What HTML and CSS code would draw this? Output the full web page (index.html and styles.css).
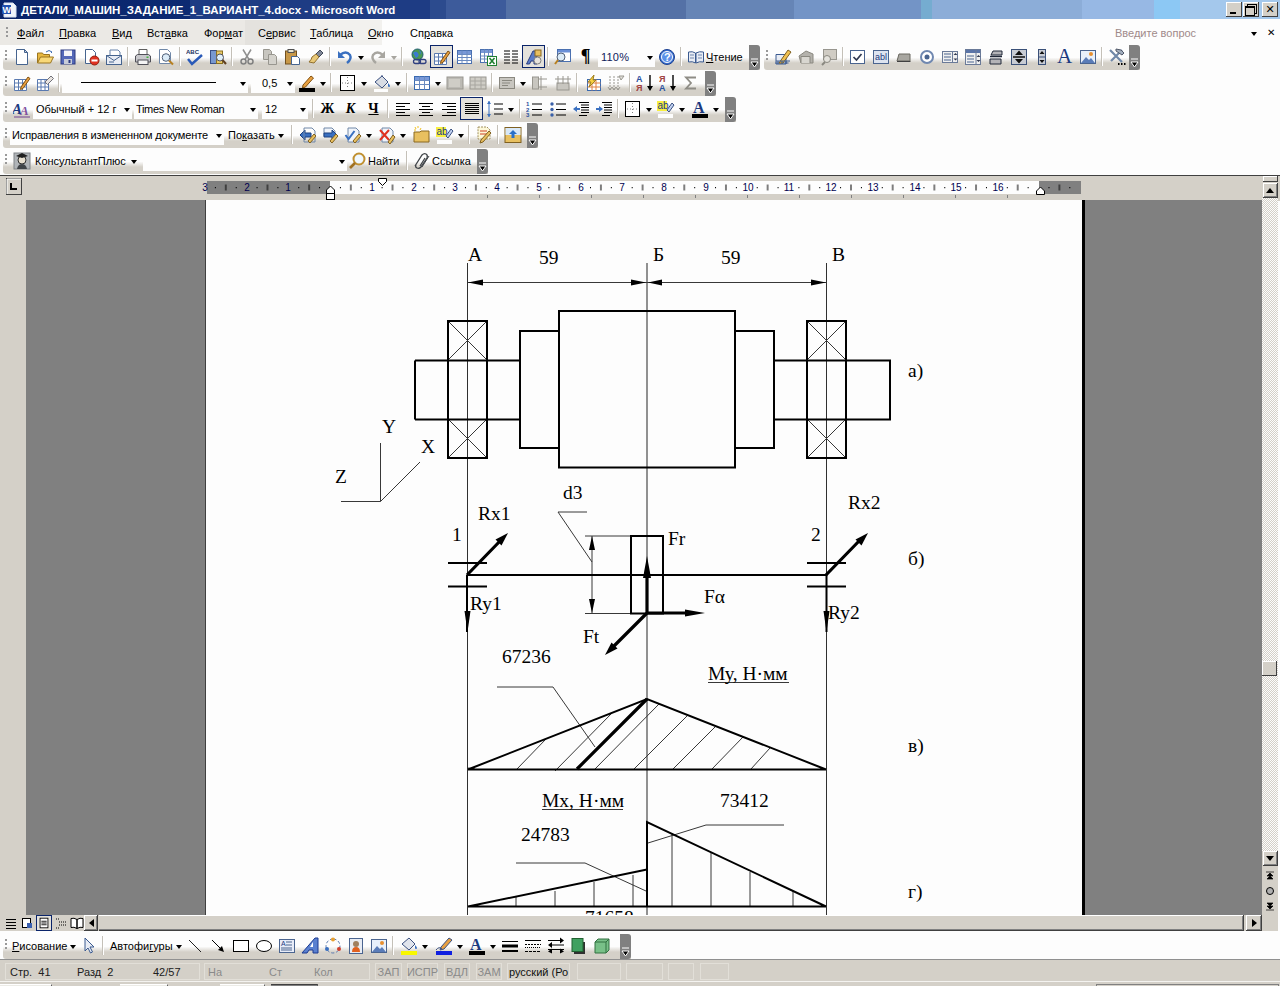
FILE: index.html
```html
<!DOCTYPE html>
<html lang="ru">
<head>
<meta charset="utf-8">
<title>Microsoft Word</title>
<link rel="stylesheet" href="styles.css">
</head>
<body>
<svg class="defs" width="0" height="0" aria-hidden="true">
<symbol id="new" viewBox="0 0 18 18"><path d="M3.5 1.5h8l3 3v12h-11z" fill="#fff" stroke="#46648f"/><path d="M11.5 1.5v3h3z" fill="#c8d4e8" stroke="#46648f"/></symbol>
<symbol id="open" viewBox="0 0 18 18"><path d="M1.5 15V5h5l1 1.5h6V9" fill="#e8b840" stroke="#9a7420"/><path d="M1.5 15l3-6h13l-3 6z" fill="#f8d878" stroke="#9a7420"/><path d="M10 4q3-3 6 0l-1 1" fill="none" stroke="#3a6ab0"/></symbol>
<symbol id="save" viewBox="0 0 18 18"><rect x="2" y="2" width="14" height="14" fill="#5468b8" stroke="#2c3a80"/><rect x="5" y="2.5" width="8" height="5.5" fill="#f4f4f8"/><rect x="5" y="11" width="8" height="5" fill="#c8ccd8"/><rect x="9.500" y="12" width="2" height="3" fill="#2c3a80"/></symbol>
<symbol id="perm" viewBox="0 0 18 18"><path d="M3.500 1.500h7l3 3v11h-10z" fill="#fff" stroke="#46648f"/><circle cx="12.500" cy="12.500" r="4.500" fill="#e03020" stroke="#902010"/><rect x="9.500" y="11.500" width="6" height="2" fill="#fff"/></symbol>
<symbol id="mail" viewBox="0 0 18 18"><path d="M5 8V2h8l2 2v4" fill="#fff" stroke="#6480a8"/><rect x="1.500" y="7.500" width="15" height="9" fill="#e8ecf4" stroke="#46648f"/><path d="M1.500 7.500l7.500 5 7.500-5M4 14h5" fill="none" stroke="#46648f"/></symbol>
<symbol id="print" viewBox="0 0 18 18"><path d="M5 7V1.500h8V7" fill="#fff" stroke="#606060"/><path d="M1.500 8l2-1.500h11l2 1.500v6h-15z" fill="#c8c8cc" stroke="#505058"/><rect x="4" y="12" width="10" height="4.500" fill="#f4f4f4" stroke="#505058"/><rect x="12.500" y="8.500" width="2" height="1.500" fill="#40b040"/></symbol>
<symbol id="prev" viewBox="0 0 18 18"><path d="M2.500 1.500h8l3 3v11h-11z" fill="#fff" stroke="#7088a8"/><circle cx="9" cy="9.500" r="3.800" fill="#dcecf8" stroke="#506078"/><path d="M12 12.500l4 4" stroke="#b88020" stroke-width="2"/></symbol>
<symbol id="res" viewBox="0 0 18 18"><rect x="1.500" y="2.500" width="6" height="13" fill="#7898d0" stroke="#3a5088"/><rect x="7.500" y="3" width="6" height="12.500" fill="#e8c868" stroke="#8a7020"/><circle cx="11" cy="9.500" r="3.500" fill="#e0f0fa" stroke="#505060"/><path d="M13.500 12l3.500 4" stroke="#604020" stroke-width="2"/></symbol>
<symbol id="cut" viewBox="0 0 18 18"><path d="M5 1.500l6 10M13 1.500l-6 10" stroke="#909090" stroke-width="1.500"/><circle cx="5.500" cy="13.500" r="2.500" fill="none" stroke="#808080" stroke-width="1.500"/><circle cx="12.500" cy="13.500" r="2.500" fill="none" stroke="#808080" stroke-width="1.500"/></symbol>
<symbol id="copy" viewBox="0 0 18 18"><path d="M2.500 1.500h6l2 2v8h-8z" fill="#c8c6c0" stroke="#98968f"/><path d="M7.500 6.500h6l2 2v8h-8z" fill="#d4d2cc" stroke="#98968f"/></symbol>
<symbol id="paste" viewBox="0 0 18 18"><rect x="1.500" y="3" width="11" height="13" fill="#c89848" stroke="#705020"/><rect x="4" y="1.500" width="6" height="3" fill="#e8e4d0" stroke="#505050"/><path d="M7.500 8.500h6l2 2v6h-8z" fill="#fff" stroke="#46648f"/></symbol>
<symbol id="paint" viewBox="0 0 18 18"><path d="M9 6l4-4 3 3-4 4z" fill="#808898" stroke="#404858"/><path d="M9 6l3 3-5 6-5-1q3-3 3-5z" fill="#e8c878" stroke="#907030"/></symbol>
<symbol id="undo" viewBox="0 0 18 18"><path d="M4 7q6-5 10 0 2 4-3 8" fill="none" stroke="#3a70c0" stroke-width="2.400"/><path d="M2 3v7h7z" fill="#3a70c0"/></symbol>
<symbol id="redo" viewBox="0 0 18 18"><path d="M14 7q-6-5-10 0-2 4 3 8" fill="none" stroke="#a8a6a0" stroke-width="2.400"/><path d="M16 3v7H9z" fill="#a8a6a0"/></symbol>
<symbol id="link" viewBox="0 0 18 18"><circle cx="7.500" cy="6.500" r="5.500" fill="#4a9a50" stroke="#1c5a70"/><path d="M3 5q3-3 5 0t-2 5M9 2q3 2 2 5" fill="#3a7ad0"/><rect x="3.500" y="11.500" width="7" height="4" rx="2" fill="none" stroke="#304080" stroke-width="1.300"/><rect x="9" y="11.500" width="7" height="4" rx="2" fill="none" stroke="#304080" stroke-width="1.300"/></symbol>
<symbol id="tdraw" viewBox="0 0 18 18"><path d="M1.500 5.500h12v11h-12zM1.500 9h12M1.500 13h12M5.500 5.500v11M9.500 5.500v11" fill="#fff" stroke="#5a7ab0"/><path d="M8 13l7-10 2 1.500-7 10-2.500 1z" fill="#e8a040" stroke="#805010"/></symbol>
<symbol id="tbl" viewBox="0 0 18 18"><rect x="1.500" y="2.500" width="14" height="13" fill="#fff" stroke="#4a70b0"/><rect x="2" y="3" width="13" height="3" fill="#7898d8"/><path d="M1.500 6.500h14M1.500 9.500h14M1.500 12.500h14M6 2.500v13M11 2.500v13" fill="none" stroke="#6a8ac0"/></symbol>
<symbol id="xl" viewBox="0 0 18 18"><rect x="1.500" y="1.500" width="12" height="13" fill="#fff" stroke="#4a70b0"/><rect x="2" y="2" width="11" height="3" fill="#7898d8"/><path d="M1.500 8h12M1.500 11h12M5.500 1.500v13M9.500 1.500v13" stroke="#6a8ac0"/><rect x="8.500" y="8.500" width="9" height="9" fill="#fff" stroke="#208030"/><path d="M10.500 10l5 6M15.500 10l-5 6" stroke="#208030" stroke-width="1.600"/></symbol>
<symbol id="cols" viewBox="0 0 18 18"><path d="M2 3h6M10 3h6M2 6h6M10 6h6M2 9h6M10 9h6M2 12h6M10 12h6M2 15h6M10 15h6" stroke="#000"/></symbol>
<symbol id="drw" viewBox="0 0 18 18"><path d="M1.500 16L8 3h4v13H9v-3H6l-1.500 3z" fill="#5a7cc8" stroke="#2a3f80"/><rect x="10" y="2" width="6" height="6" fill="#e8c060" stroke="#8a6820"/><circle cx="12.500" cy="12.500" r="3.500" fill="#e8e4dc" stroke="#808080"/></symbol>
<symbol id="map" viewBox="0 0 18 18"><rect x="3.500" y="1.500" width="13" height="12" fill="#fff" stroke="#4a70b0"/><rect x="4" y="2" width="12" height="2.500" fill="#6a90d8"/><circle cx="7" cy="9" r="4" fill="#dcecf8" stroke="#506078"/><path d="M4 12l-3 4" stroke="#b88020" stroke-width="2"/></symbol>
<symbol id="book" viewBox="0 0 18 18"><path d="M1.500 4q4-1 7 1v10q-3-2-7-1zM16.500 4q-4-1-7.500 1v10q3.500-2 7.500-1z" fill="#e8ecf4" stroke="#3a5a90"/><path d="M3 7h4M3 10h4M11 7h4M11 10h4" stroke="#7088b0"/></symbol>
<symbol id="fd" viewBox="0 0 18 18"><path d="M2 6.500h10V16H2z" fill="#e8ecf4" stroke="#3a5a90"/><path d="M1.500 15l13-0" stroke="#3a5a90"/><path d="M5 15L14 2l3 2-8 11z" fill="#f0c050" stroke="#806020"/><path d="M2 13h14M4 13v3M8 13v3M12 13v3" stroke="#3a5a90"/></symbol>
<symbol id="fg1" viewBox="0 0 18 18"><path d="M2 8l7-5 7 3v9H4z" fill="#b4b2ac" stroke="#8a8880"/><path d="M4 15V8.500h9V15" fill="#d8d6d0" stroke="#8a8880"/></symbol>
<symbol id="fg2" viewBox="0 0 18 18"><rect x="3.500" y="1.500" width="13" height="10" fill="#d0ccc4" stroke="#98968f"/><circle cx="7" cy="11" r="3.500" fill="#e4e2dc" stroke="#8a8880"/><path d="M5 14l-3 3" stroke="#8a8880" stroke-width="2"/></symbol>
<symbol id="fchk" viewBox="0 0 18 18"><rect x="1.500" y="2.500" width="14" height="13" fill="#fff" stroke="#4a648f"/><path d="M4.500 9l3 3 5-6" fill="none" stroke="#303850" stroke-width="1.700"/></symbol>
<symbol id="fbtn" viewBox="0 0 18 18"><path d="M4 6h11v7H2z" fill="#a8a6a0" stroke="#6a6860"/><path d="M2 13.500h13.500" stroke="#404040"/></symbol>
<symbol id="frad" viewBox="0 0 18 18"><circle cx="9" cy="9" r="6" fill="#fff" stroke="#7088b0" stroke-width="2"/><circle cx="9" cy="9" r="2.500" fill="#4a648f"/></symbol>
<symbol id="flst" viewBox="0 0 18 18"><rect x="1.500" y="3.500" width="15" height="11" fill="#f0f0f0" stroke="#6a7a98"/><path d="M3 6h7M3 9h7M3 12h7" stroke="#4a648f"/><path d="M11.500 3.500v11" stroke="#6a7a98"/><path d="M12.500 7l2-2 2 2zM12.500 10.500l2 2 2-2z" fill="#303850"/></symbol>
<symbol id="fcmb" viewBox="0 0 18 18"><rect x="1.500" y="1.500" width="15" height="15" fill="#f0f0f0" stroke="#6a7a98"/><rect x="2" y="2" width="14" height="3" fill="#5a74a8"/><path d="M3 8h7M3 11h7M3 14h7" stroke="#4a648f"/><path d="M12 2v14" stroke="#6a7a98"/><path d="M12.500 9l2-2 2 2zM12.500 12l2 2 2-2z" fill="#303850"/></symbol>
<symbol id="ffr" viewBox="0 0 18 18"><path d="M4 7l2-4h9v4zM3 11h11v5H3z" fill="#b4b4b8" stroke="#202838"/><path d="M3 8.500h12" stroke="#202838" stroke-width="1.500"/></symbol>
<symbol id="fsp" viewBox="0 0 18 18"><rect x="1.500" y="1.500" width="15" height="15" fill="#c8ccd4" stroke="#3a5078"/><path d="M9 2.500l4 4.500H5zM9 15.500l4-4.500H5z" fill="#101010"/><path d="M3 9h12" stroke="#101010" stroke-width="1.500"/></symbol>
<symbol id="fsc" viewBox="0 0 18 18"><rect x="5.500" y="1.500" width="7" height="15" fill="#c8ccd4" stroke="#3a5078"/><path d="M9 3l2.500 3h-5zM9 15l2.500-3h-5z" fill="#101010"/><path d="M6 9h6" stroke="#3a5078"/></symbol>
<symbol id="pic" viewBox="0 0 18 18"><rect x="1.500" y="2.500" width="15" height="13" fill="#e8f0fa" stroke="#4a648f"/><path d="M2 15l5-6 3 3 2-2 4 5z" fill="#5a7cb8"/><circle cx="12" cy="6" r="2" fill="#e89030"/></symbol>
<symbol id="tools" viewBox="0 0 18 18"><path d="M2 2l12 12M14 2L3 13" stroke="#7088a8" stroke-width="2.200"/><path d="M8 1l5 1 3 3-2 2-6-4z" fill="#a0acbc" stroke="#505868"/><path d="M10 16h1.500M13 16h1.500M16 16h1.500" stroke="#000" stroke-width="2"/></symbol>
<symbol id="eras" viewBox="0 0 18 18"><path d="M1.500 5.500h11v11h-11zM1.500 9h11M1.500 13h11M5 5.500v11M9 5.500v11" fill="#fff" stroke="#5a7ab0"/><path d="M9 8l6-6 2.500 2.500-6 6z" fill="#e8e4e0" stroke="#707078"/></symbol>
<symbol id="pen" viewBox="0 0 18 18"><path d="M5 11l8-9 2.500 2-8 9-3 1z" fill="#e8a040" stroke="#805010"/><rect x="1" y="14" width="16" height="4" fill="#000"/></symbol>
<symbol id="bord" viewBox="0 0 18 18"><rect x="1.500" y="1.500" width="14" height="15" fill="#fff" stroke="#000"/><path d="M8.500 3v12M3 9h11" stroke="#808080" stroke-dasharray="1 2"/></symbol>
<symbol id="fill" viewBox="0 0 18 18"><path d="M2 8l7-6 6 6-6 6z" fill="#d8dce4" stroke="#3a5080"/><path d="M15 9q2 2 2 3t-1 1-1-1z" fill="#3a70c0"/><path d="M9 2V1" stroke="#3a5080"/><rect x="1" y="15" width="14" height="3" fill="#fdfdfd"/></symbol>
<symbol id="tins" viewBox="0 0 18 18"><rect x="1.500" y="2.500" width="15" height="13" fill="#fff" stroke="#3a6ab0"/><rect x="2" y="3" width="14" height="3" fill="#7898d8"/><path d="M1.500 6.500h15M1.500 10.500h15M6.500 2.500v13M11.500 2.500v13" stroke="#6a8ac0"/></symbol>
<symbol id="mrg" viewBox="0 0 18 18"><rect x="1" y="3" width="16" height="12" fill="#bcbab4" stroke="#98968f"/><rect x="3" y="5" width="11" height="8" fill="#cfcdc6"/></symbol>
<symbol id="spl" viewBox="0 0 18 18"><rect x="1" y="3" width="16" height="12" fill="#cfcdc6" stroke="#98968f"/><path d="M1 7h16M1 11h16M6 3v12M12 3v12" stroke="#a8a6a0"/></symbol>
<symbol id="al" viewBox="0 0 18 18"><rect x="1.500" y="3.500" width="15" height="11" fill="#c8c6c0" stroke="#8a8880"/><path d="M4 6.500h10M4 9h8M4 11.500h6" stroke="#8a8880"/></symbol>
<symbol id="dr" viewBox="0 0 18 18"><rect x="1.500" y="3" width="6" height="12" fill="#c8c6c0" stroke="#98968f"/><path d="M10 2v14M8 5h8M8 13h8" stroke="#98968f"/></symbol>
<symbol id="dc" viewBox="0 0 18 18"><rect x="3" y="9" width="12" height="7" fill="#c8c6c0" stroke="#98968f"/><path d="M1 5h16M4 2v8M9 2v8M14 2v8" stroke="#98968f"/></symbol>
<symbol id="afm" viewBox="0 0 18 18"><rect x="3.500" y="5.500" width="13" height="11" fill="#fff" stroke="#3a6ab0"/><path d="M3.500 9h13M3.500 13h13M8 5.500v11M12 5.500v11" stroke="#e08040"/><path d="M10 1L4 8h3l-2 5 7-7H9z" fill="#f8d040" stroke="#a08020"/></symbol>
<symbol id="tdir" viewBox="0 0 18 18"><path d="M3 2v14M7 2v14M11 2v14" stroke="#98968f" stroke-dasharray="2 1"/><path d="M1 13l2 3 2-3M5 13l2 3 2-3M9 13l2 3 2-3" fill="none" stroke="#98968f"/><path d="M12 2h5l-3 4z" fill="#e4e2dc" stroke="#98968f"/></symbol>
<symbol id="sig" viewBox="0 0 18 18"><path d="M14 3.500H4l5 5.500-5 5.500h10" fill="none" stroke="#8e8c85" stroke-width="1.800"/></symbol>
<symbol id="al1" viewBox="0 0 18 18"><path d="M2 3.500h14M2 6.500h9M2 9.500h14M2 12.500h9M2 15.500h14" stroke="#000"/></symbol>
<symbol id="al2" viewBox="0 0 18 18"><path d="M2 3.500h14M5 6.500h8M2 9.500h14M5 12.500h8M2 15.500h14" stroke="#000"/></symbol>
<symbol id="al3" viewBox="0 0 18 18"><path d="M2 3.500h14M7 6.500h9M2 9.500h14M7 12.500h9M2 15.500h14" stroke="#000"/></symbol>
<symbol id="al4" viewBox="0 0 18 18"><path d="M2 3.500h14M2 5.500h14M2 7.500h14M2 9.500h14M2 11.500h14M2 13.500h14" stroke="#000"/></symbol>
<symbol id="lsp" viewBox="0 0 18 18"><path d="M3 1v16" stroke="#3a70c0"/><path d="M1 4l2-3 2 3zM1 14l2 3 2-3z" fill="#3a70c0"/><path d="M8 4h9M8 9h9M8 14h9" stroke="#000"/></symbol>
<symbol id="bul" viewBox="0 0 18 18"><circle cx="3" cy="4" r="1.700" fill="#3a60a8"/><circle cx="3" cy="9.500" r="1.700" fill="#3a60a8"/><circle cx="3" cy="15" r="1.700" fill="#3a60a8"/><path d="M7 4h10M7 9.500h10M7 15h10" stroke="#000"/></symbol>
<symbol id="outd" viewBox="0 0 18 18"><path d="M7 2.500h10M9 5h8M9 7.500h8M9 10h8M9 12.500h8M7 15.500h8" stroke="#000"/><path d="M1 9l4-3v6z" fill="#3a70c0"/><path d="M4 9h4" stroke="#3a70c0" stroke-width="2"/></symbol>
<symbol id="ind" viewBox="0 0 18 18"><path d="M7 2.500h10M9 5h8M9 7.500h8M9 10h8M9 12.500h8M7 15.500h8" stroke="#000"/><path d="M8 9L4 6v6z" fill="#3a70c0"/><path d="M1 9h4" stroke="#3a70c0" stroke-width="2"/></symbol>
<symbol id="tprev" viewBox="0 0 18 18"><path d="M2 9l5-5v3h6v4H7v3z" fill="#3a70c0" stroke="#1c4080"/><path d="M6 2h8l3 3v11H6z" fill="none" stroke="#7088a8"/><path d="M10 15l6-7 2 2-6 7z" fill="#e8c060" stroke="#806020"/></symbol>
<symbol id="tnext" viewBox="0 0 18 18"><path d="M3 2h8l3 3v5H3z" fill="#f0f4fa" stroke="#7088a8"/><path d="M16 9l-5-5v3H3v4h8v3z" fill="#3a70c0" stroke="#1c4080"/><path d="M9 15l6-7 2 2-6 7z" fill="#e8c060" stroke="#806020"/></symbol>
<symbol id="tacc" viewBox="0 0 18 18"><path d="M4 2h8l3 3v11H4z" fill="#f0f4fa" stroke="#7088a8"/><path d="M1.500 9l3 4 6-8" fill="none" stroke="#3a70c0" stroke-width="2"/><path d="M9 15l6-7 2 2-6 7z" fill="#e8c060" stroke="#806020"/></symbol>
<symbol id="trej" viewBox="0 0 18 18"><path d="M4 2h8l3 3v11H4z" fill="#f0f4fa" stroke="#7088a8"/><path d="M2 4l9 10M11 4l-9 10" stroke="#e03020" stroke-width="2"/><path d="M10 16l5-7 2 2-5 7z" fill="#e8c060" stroke="#806020"/></symbol>
<symbol id="fold" viewBox="0 0 18 18"><path d="M1 6h6l1-1h8v11H1z" fill="#e8c060" stroke="#8a6820"/><path d="M2 1l1 2M5 0v2M8 2l-1 2M1 4h2" stroke="#f0c020"/></symbol>
<symbol id="trk" viewBox="0 0 18 18"><path d="M3 1h9l3 3v9H3z" fill="#fdf8d8" stroke="#a09060" stroke-dasharray="2 1"/><path d="M5 5h7M5 8h7" stroke="#d04020"/><path d="M6 14l8-9 2 2-8 9-3 1z" fill="#e8c060" stroke="#806020"/></symbol>
<symbol id="cmp" viewBox="0 0 18 18"><rect x="1" y="1.500" width="16" height="15" fill="#e8c060" stroke="#806020"/><rect x="1.500" y="2" width="15" height="7" fill="#d8e8f8"/><path d="M9 4l4 4h-2.500v4h-3V8H5z" fill="#2a70c8"/></symbol>
<symbol id="kons" viewBox="0 0 18 18"><rect x="1" y="1" width="16" height="16" fill="#b0b4b8" stroke="#808488"/><circle cx="9" cy="8" r="4" fill="#e8e0d0" stroke="#303030"/><path d="M3 4l6-3 6 3-6 2z" fill="#202020"/><path d="M4 17q1-5 5-5t5 5z" fill="#404448"/></symbol>
<symbol id="find" viewBox="0 0 18 18"><circle cx="10" cy="7" r="5.500" fill="#f0f8ff" stroke="#c09030" stroke-width="2"/><path d="M6 11l-5 5" stroke="#a07020" stroke-width="2.600"/></symbol>
<symbol id="chain" viewBox="0 0 18 18"><path d="M2 14L9 3q2-2 4-1t1 4l-6 9q-2 2-4 1t-1-3zM7 14l5-8" fill="none" stroke="#404448" stroke-width="1.300"/><path d="M16 4l-7 11" stroke="#404448"/></symbol>
<symbol id="arr" viewBox="0 0 18 18"><path d="M5 1v13l3-3 2.500 5 2-1-2.500-5h4z" fill="#e8ecf4" stroke="#3a5a90"/></symbol>
<symbol id="dl" viewBox="0 0 18 18"><path d="M3 3l12 12" stroke="#202020"/></symbol>
<symbol id="da" viewBox="0 0 18 18"><path d="M3 3l11 11" stroke="#000"/><path d="M15 15l-6-2 4-4z" fill="#000"/></symbol>
<symbol id="dre" viewBox="0 0 18 18"><rect x="1.500" y="3.500" width="15" height="11" fill="#fff" stroke="#000"/></symbol>
<symbol id="dov" viewBox="0 0 18 18"><ellipse cx="9" cy="9" rx="7.500" ry="5.500" fill="#fff" stroke="#000"/></symbol>
<symbol id="dwa" viewBox="0 0 18 18"><path d="M1 16L14 1h3v15h-5v-3H8l-2 3z" fill="#5a80d0" stroke="#1c3a90"/><path d="M12 5v5H9z" fill="#fff"/></symbol>
<symbol id="ddg" viewBox="0 0 18 18"><path d="M9 2a7 7 0 1 0 .01 0" fill="none" stroke="#5a7ab0" stroke-dasharray="3 2"/><circle cx="9" cy="2.500" r="2" fill="#e8a030"/><circle cx="3" cy="12" r="2" fill="#3a70c0"/><circle cx="15" cy="12" r="2" fill="#d04030"/></symbol>
<symbol id="dcl" viewBox="0 0 18 18"><rect x="2.500" y="1.500" width="13" height="15" fill="#e8ecf4" stroke="#4a648f"/><circle cx="9" cy="7" r="3" fill="#a08060"/><path d="M5 15q0-5 4-5t4 5z" fill="#e06020"/></symbol>
<symbol id="fpen" viewBox="0 0 18 18"><path d="M6 10L14 1l3 2-8 9-4 1z" fill="#e8a040" stroke="#3a5080"/><rect x="1" y="14" width="16" height="4" fill="#1020e0"/><path d="M1 13q3-4 6-1" stroke="#3a5080" fill="none"/></symbol>
<symbol id="ffl" viewBox="0 0 18 18"><path d="M2 7l7-6 6 6-6 6z" fill="#e0e4ec" stroke="#3a5080"/><path d="M15 8q2 2 2 3t-1 1-1-1z" fill="#3a70c0"/><rect x="1" y="14" width="16" height="4" fill="#f8f800"/></symbol>
<symbol id="wd" viewBox="0 0 18 18"><path d="M1 4.500h16" stroke="#000" stroke-width="1"/><path d="M1 9h16" stroke="#000" stroke-width="3"/><path d="M1 14h16" stroke="#000" stroke-width="2"/></symbol>
<symbol id="dsh" viewBox="0 0 18 18"><path d="M1 3.500h16" stroke="#000"/><path d="M1 7.500h16" stroke="#000" stroke-dasharray="2 1"/><path d="M1 10.500h16" stroke="#000" stroke-dasharray="1 1"/><path d="M1 14.500h16" stroke="#000" stroke-dasharray="3 1"/></symbol>
<symbol id="ars" viewBox="0 0 18 18"><path d="M1 3.500h14M3 8h14M1 12.500h16" stroke="#000"/><path d="M17 3.500l-4-3v6zM1 8l4-3v6zM1 14.500l4-3v5zM17 14.500l-4-3v5z" fill="#000"/></symbol>
<symbol id="shd" viewBox="0 0 18 18"><rect x="4" y="5" width="11" height="12" fill="#303030"/><rect x="2" y="1.500" width="11" height="13" fill="#40a060" stroke="#206030"/></symbol>
<symbol id="d3" viewBox="0 0 18 18"><path d="M2 5l3-3h11v11l-3 3H2z" fill="#78c088" stroke="#307040"/><path d="M2 5h11v11M13 5l3-3" fill="none" stroke="#307040"/></symbol>
<symbol id="grip" viewBox="0 0 9 12"><path d="M1 2h7" stroke="#fff"/><path d="M1 5h7l-3.500 5z" fill="#000" stroke="#fff"/></symbol>
</svg>

<div class="app">
  <header class="title">
    <svg class="wlogo" viewBox="0 0 16 16"><path d="M2 1h9l3 3v11H2z" fill="#f0f4fc" stroke="#d8e0f0"/><rect x="0" y="3" width="9" height="9" fill="#2050b0"/><text x="0.500" y="11" class="t9 bold wh">W</text></svg>
    <span class="title-text">ДЕТАЛИ_МАШИН_ЗАДАНИЕ_1_ВАРИАНТ_4.docx - Microsoft Word</span>
    <div class="winbtns">
      <span class="wb wb-min"></span>
      <span class="wb wb-max"></span>
      <span class="wb wb-x">✕</span>
    </div>
  </header>

  <nav class="menubar">
    <span class="menu-grip"></span>
    <div class="menus">
      <span><u>Ф</u>айл</span><span><u>П</u>равка</span><span><u>В</u>ид</span><span>Вст<u>а</u>вка</span><span>Фор<u>м</u>ат</span><span>С<u>е</u>рвис</span><span><u>Т</u>аблица</span><span><u>О</u>кно</span><span>Сп<u>р</u>авка</span>
    </div>
    <span class="ask">Введите вопрос</span>
    <span class="dd ask-dd"></span>
    <span class="menu-x">✕</span>
  </nav>

  <div class="row">
    <div class="tb w-r1">
      <i class="b"><svg><use href="#new"/></svg></i><i class="b"><svg><use href="#open"/></svg></i><i class="b"><svg><use href="#save"/></svg></i><i class="b"><svg><use href="#perm"/></svg></i><i class="b"><svg><use href="#mail"/></svg></i><i class="s"></i>
      <i class="b"><svg><use href="#print"/></svg></i><i class="b"><svg><use href="#prev"/></svg></i><i class="s"></i>
      <i class="b"><svg viewBox="0 0 18 18"><text x="0" y="6" class="t6 bold">ABC</text><path d="M2 11l4 5 10-9" fill="none" stroke="#2a5ab8" stroke-width="2.500"/></svg></i><i class="b"><svg><use href="#res"/></svg></i><i class="s"></i>
      <i class="b"><svg><use href="#cut"/></svg></i><i class="b"><svg><use href="#copy"/></svg></i><i class="b"><svg><use href="#paste"/></svg></i><i class="b"><svg><use href="#paint"/></svg></i><i class="s"></i>
      <i class="b"><svg><use href="#undo"/></svg></i><i class="dd"></i><i class="b"><svg><use href="#redo"/></svg></i><i class="dd dis"></i><i class="s"></i>
      <i class="b ml2"><svg><use href="#link"/></svg></i><i class="b on"><svg><use href="#tdraw"/></svg></i><i class="b"><svg><use href="#tbl"/></svg></i><i class="b"><svg><use href="#xl"/></svg></i><i class="b"><svg><use href="#cols"/></svg></i><i class="b on"><svg><use href="#drw"/></svg></i><i class="s"></i>
      <i class="b"><svg><use href="#map"/></svg></i><i class="b pil">¶</i>
      <span class="combo c-zoom"><span>110%</span><i class="dd"></i></span>
      <i class="b"><svg viewBox="0 0 18 18"><circle cx="9" cy="9" r="7.500" fill="#3a70d0" stroke="#1c4090"/><circle cx="9" cy="9" r="5.500" fill="#5a90e8" stroke="#fff"/><text x="6" y="13" class="t11 bold wh">?</text></svg></i><i class="s"></i>
      <i class="b bk"><svg><use href="#book"/></svg></i><span class="lbl lbl-read"><u>Ч</u>тение</span>
      <span class="gr"><svg><use href="#grip"/></svg></span>
    </div>
    <div class="tb w-r1b">
      <i class="b"><svg><use href="#fd"/></svg></i><i class="b"><svg><use href="#fg1"/></svg></i><i class="b"><svg><use href="#fg2"/></svg></i><i class="s"></i>
      <i class="b"><svg><use href="#fchk"/></svg></i><i class="b"><svg viewBox="0 0 18 18"><rect x="1.500" y="2.500" width="15" height="13" fill="#dde4f0" stroke="#4a648f"/><text x="3" y="12" class="t9 nv">abl</text></svg></i><i class="b"><svg><use href="#fbtn"/></svg></i><i class="b"><svg><use href="#frad"/></svg></i><i class="b"><svg><use href="#flst"/></svg></i><i class="b"><svg><use href="#fcmb"/></svg></i><i class="b"><svg><use href="#ffr"/></svg></i><i class="b"><svg><use href="#fsp"/></svg></i><i class="b"><svg><use href="#fsc"/></svg></i><i class="b fA">A</i><i class="b"><svg><use href="#pic"/></svg></i><i class="s"></i>
      <i class="b"><svg><use href="#tools"/></svg></i>
      <span class="gr"><svg><use href="#grip"/></svg></span>
    </div>
  </div>

  <div class="row">
    <div class="tb w-r2">
      <i class="b"><svg><use href="#tdraw"/></svg></i><i class="b"><svg><use href="#eras"/></svg></i><i class="s"></i>
      <span class="combo c-line"><span class="lnsample"></span><i class="dd"></i></span>
      <span class="combo c-wd ml3"><span>0,5</span><i class="dd"></i></span>
      <i class="b"><svg><use href="#pen"/></svg></i><i class="dd"></i><i class="s"></i>
      <i class="b ml2"><svg><use href="#bord"/></svg></i><i class="dd"></i><i class="b ml1"><svg><use href="#fill"/></svg></i><i class="dd"></i><i class="s ml1"></i>
      <i class="b"><svg><use href="#tins"/></svg></i><i class="dd"></i><i class="b"><svg><use href="#mrg"/></svg></i><i class="b"><svg><use href="#spl"/></svg></i><i class="s"></i>
      <i class="b"><svg><use href="#al"/></svg></i><i class="dd"></i><i class="b"><svg><use href="#dr"/></svg></i><i class="b"><svg><use href="#dc"/></svg></i><i class="s"></i>
      <i class="b ml1"><svg><use href="#afm"/></svg></i><i class="b"><svg><use href="#tdir"/></svg></i><i class="s"></i>
      <i class="b"><svg viewBox="0 0 18 18"><text x="0" y="8" class="t9 bold bl">А</text><text x="0" y="17" class="t9 bold rd">Я</text><path d="M14 1v13" stroke="#000" stroke-width="1.400"/><path d="M11 12l3 5 3-5z" fill="#000"/></svg></i><i class="b"><svg viewBox="0 0 18 18"><text x="0" y="8" class="t9 bold rd">Я</text><text x="0" y="17" class="t9 bold bl">А</text><path d="M14 1v13" stroke="#000" stroke-width="1.400"/><path d="M11 12l3 5 3-5z" fill="#000"/></svg></i><i class="b"><svg><use href="#sig"/></svg></i>
      <span class="gr"><svg><use href="#grip"/></svg></span>
    </div>
  </div>

  <div class="row">
    <div class="tb w-r3">
      <i class="b"><svg viewBox="0 0 18 18"><text x="-1" y="14" class="t15 bold nv ital">A</text><text x="7" y="15" class="t13 bold pr ital">A</text><path d="M1 17h16" stroke="#704090"/></svg></i>
      <span class="combo c-sty"><span>Обычный + 12 г</span><i class="dd"></i></span>
      <span class="combo c-fnt ml2"><span>Times New Roman</span><i class="dd"></i></span>
      <span class="combo c-sz ml4"><span>12</span><i class="dd"></i></span><i class="s ml2"></i>
      <i class="b fb">Ж</i><i class="b fb fi">К</i><i class="b fb fu">Ч</i><i class="s"></i>
      <i class="b"><svg><use href="#al1"/></svg></i><i class="b"><svg><use href="#al2"/></svg></i><i class="b"><svg><use href="#al3"/></svg></i><i class="b on"><svg><use href="#al4"/></svg></i><i class="b"><svg><use href="#lsp"/></svg></i><i class="dd"></i><i class="s ml1"></i>
      <i class="b"><svg viewBox="0 0 18 18"><text x="0" y="6" class="t6 bold bl">1</text><text x="0" y="11.500" class="t6 bold bl">2</text><text x="0" y="17" class="t6 bold bl">3</text><path d="M6 4h10M6 9.500h10M6 15h10" stroke="#000"/></svg></i><i class="b"><svg><use href="#bul"/></svg></i><i class="b"><svg><use href="#outd"/></svg></i><i class="b"><svg><use href="#ind"/></svg></i><i class="s"></i>
      <i class="b"><svg><use href="#bord"/></svg></i><i class="dd"></i><i class="b"><svg viewBox="0 0 18 18"><rect x="0" y="1" width="10" height="10" fill="#f8f040"/><text x="0.500" y="9" class="t10 nv">ab</text><path d="M10 10l5-7 2 2-5 7z" fill="#c0d0f0" stroke="#3a5080"/><rect x="1" y="14" width="15" height="4" fill="#fdfdfd"/></svg></i><i class="dd"></i><i class="b ml1"><svg viewBox="0 0 18 18"><text x="2" y="13" class="t16 bold nv">A</text><rect x="1" y="14" width="16" height="4" fill="#000"/></svg></i><i class="dd"></i>
      <span class="gr"><svg><use href="#grip"/></svg></span>
    </div>
  </div>

  <div class="row">
    <div class="tb w-r4">
      <span class="combo c-rev"><span>Исправления в измененном документе</span><i class="dd"></i></span>
      <span class="lbl lbl-show">По<u>к</u>азать</span><i class="dd dd-tight"></i><i class="s sep-show"></i>
      <i class="b"><svg><use href="#tprev"/></svg></i><i class="b"><svg><use href="#tnext"/></svg></i><i class="b"><svg><use href="#tacc"/></svg></i><i class="dd"></i><i class="b ml1"><svg><use href="#trej"/></svg></i><i class="dd"></i><i class="b ml2"><svg><use href="#fold"/></svg></i><i class="b"><svg viewBox="0 0 18 18"><rect x="0" y="1" width="10" height="10" fill="#f8f040"/><text x="0.500" y="9" class="t10 nv">ab</text><path d="M10 10l5-7 2 2-5 7z" fill="#c0d0f0" stroke="#3a5080"/><rect x="1" y="14" width="15" height="4" fill="#fdfdfd"/></svg></i><i class="dd"></i><i class="s"></i>
      <i class="b"><svg><use href="#trk"/></svg></i><i class="s"></i><i class="b"><svg><use href="#cmp"/></svg></i>
      <span class="gr"><svg><use href="#grip"/></svg></span>
    </div>
  </div>

  <div class="row">
    <div class="tb w-r5">
      <i class="b"><svg><use href="#kons"/></svg></i>
      <span class="lbl lbl-kons">КонсультантПлюс</span><i class="dd dd-tight"></i>
      <span class="combo c-kons"><span></span><i class="dd"></i></span>
      <i class="b b-find"><svg><use href="#find"/></svg></i><span class="lbl lbl-find">Найти</span><i class="s"></i>
      <i class="b b-link"><svg><use href="#chain"/></svg></i><span class="lbl">Ссылка</span>
      <span class="gr"><svg><use href="#grip"/></svg></span>
    </div>
  </div>

  <main class="doc">
    <div class="doc-left">
      <svg class="ruler" viewBox="0 176 1262 24">
        <defs>
          <pattern id="tk" x="330" y="181" width="41.68" height="13" patternUnits="userSpaceOnUse">
            <path d="M20.840 3.500v6M10.420 6v1.200M31.260 6v1.200" stroke="#000" fill="none"/>
          </pattern>
        </defs>
        <rect x="330" y="181" width="709" height="13" fill="#fdfdfd"/>
        <rect x="207" y="181" width="123" height="13" fill="#808080"/>
        <rect x="1039" y="181" width="42" height="13" fill="#808080"/>
        <rect x="207" y="181" width="874" height="13" fill="url(#tk)"/>
        <g class="rn">
          <text x="205" y="191">3</text><text x="247" y="191">2</text><text x="288" y="191">1</text>
          <text x="372" y="191">1</text><text x="414" y="191">2</text><text x="455" y="191">3</text><text x="497" y="191">4</text><text x="539" y="191">5</text><text x="581" y="191">6</text><text x="622" y="191">7</text><text x="664" y="191">8</text><text x="706" y="191">9</text><text x="748" y="191">10</text><text x="789" y="191">11</text><text x="831" y="191">12</text><text x="873" y="191">13</text><text x="915" y="191">14</text><text x="956" y="191">15</text><text x="998" y="191">16</text>
        </g>
        <path d="M487.500 195v3M539.500 195v3M591.500 195v3M643.500 195v3M695.500 195v3M747.500 195v3M799.500 195v3M851.500 195v3M903.500 195v3M955.500 195v3M1007.500 195v3" stroke="#808080"/>
        <path d="M378.500 178.500h8v3l-4 4-4-4z" fill="#fff" stroke="#000"/>
        <path d="M330.500 186l4 4v3.500h-8V190z" fill="#fff" stroke="#000"/>
        <rect x="326.500" y="193.500" width="8" height="6" fill="#fff" stroke="#000"/>
        <path d="M1040.500 187l4 4v3.500h-8V191z" fill="#fff" stroke="#000"/>
        <rect x="6.500" y="178.500" width="15" height="16" fill="#d4d0c8" stroke="#404040"/>
        <path d="M7 179h14M7 179v15" stroke="#fff"/>
        <path d="M11 183v6h6" fill="none" stroke="#000" stroke-width="2"/>
      </svg>
      <div class="mid">
        <div class="gutter"></div>
        <div class="pasteboard">
          <div class="page">
            <svg class="drawing" viewBox="206 200 876 715">
              <g class="axis">
                <path d="M467.500 263v652M826.500 263v652"/>
                <path class="axis-b" d="M647 263v652"/>
              </g>
              <g class="thin">
                <path d="M468 282.500h358"/>
                <path d="M448 321l39 39M487 321l-39 39M448 419l39 39M487 419l-39 39M807 321l39 39M846 321l-39 39M807 419l39 39M846 419l-39 39"/>
                <path d="M380.500 443v58.500M341 501.500h39.500L420 462"/>
                <path d="M558 512h29M558 512l34 50M592 536v77M585 536h46M585 613.500h46"/>
                <path d="M497 687h56l42 60"/>
                <path d="M517 769l29-30M555 771l57-58M595 769l64-65M634 769l53-53M673 769l42-42M712 769l31-32M751 769l19-21M475 769l-7-1"/>
                <path d="M648 843l58-18h78M516 863h69l61 28"/>
                <path d="M516 897v9M555 891v15M594 882v24M633 875v31M672 833v73M711 853v53M750 872v34M793 891v15"/>
                <path d="M542 809.500h81M708 682.500h81"/>
              </g>
              <g class="heads">
                <polygon points="468,282.500 483,279.500 483,285.500"/><polygon points="646,282.500 631,279.500 631,285.500"/>
                <polygon points="648,282.500 662,279.500 662,285.500"/><polygon points="826,282.500 811,279.500 811,285.500"/>
                <polygon points="592,536 589,550 595,550"/><polygon points="592,613 589,599 595,599"/>
                <polygon points="508,533 495.500,539.500 501.500,545.500"/><polygon points="868,533 855.500,539.500 861.500,545.500"/>
                <polygon points="605,655 617.500,648.500 611.500,642.500"/>
                <polygon points="467.500,632 464.500,611 470.500,611"/><polygon points="826.500,632 823.500,611 829.500,611"/>
                <polygon points="647,556 643,578 651,578"/>
                <polygon points="705,613 685,609.500 685,616.500"/>
              </g>
              <g class="heavy">
                <path d="M559 311h176v156.500H559zM520 331h39v117h-39zM735 331h39v117h-39zM415 360.500h105M415 419.500h105M415 360.500v59M774 360.500h116v59H774M448 321h39v137h-39zM807 321h39v137h-39z"/>
                <path d="M631 536h32v77.500h-32z"/>
                <path d="M467 575h360M448 563h39M448 586.500h39M807 563h39M807 586.500h39"/>
                <path d="M467 632V575M826.500 632V575"/>
                <path d="M468 769.500L647 699l179 70.500M468 769.500h358"/>
                <path d="M647 906.500V822l179 84.500M468 906.500l179-37M468 906.500h358"/>
              </g>
              <g class="bold-arrow">
                <path d="M467 575l35-36M826 575l35-36M647 613l-36 36M647 613v-40M647 613h45M577 769l70-70"/>
              </g>
              <g class="dt">
                <text x="468" y="261">А</text><text x="539" y="264">59</text><text x="653" y="261">Б</text><text x="721" y="264">59</text><text x="832" y="261">В</text>
                <text x="908" y="377">а)</text><text x="908" y="565">б)</text><text x="908" y="752">в)</text><text x="908" y="898">г)</text>
                <text x="382" y="433">Y</text><text x="421" y="453">X</text><text x="335" y="483">Z</text>
                <text x="563" y="499">d3</text><text x="478" y="520">Rx1</text><text x="452" y="541">1</text><text x="470" y="610">Ry1</text>
                <text x="811" y="541">2</text><text x="848" y="509">Rx2</text><text x="828" y="619">Ry2</text>
                <text x="668" y="545">Fr</text><text x="704" y="603">Fα</text><text x="583" y="643">Ft</text>
                <text x="502" y="663">67236</text><text x="708" y="680">Му, Н·мм</text>
                <text x="542" y="807">Мх, Н·мм</text><text x="720" y="807">73412</text><text x="521" y="841">24783</text><text x="585" y="924">71658</text>
              </g>
            </svg>
          </div>
        </div>
      </div>
      <div class="hbar">
        <div class="views">
          <svg viewBox="0 0 14 14"><path d="M2 3.500h10M2 6.500h10M2 9.500h10M2 12.500h10" stroke="#000"/></svg>
          <svg viewBox="0 0 14 14"><rect x="2.500" y="2.500" width="8" height="9" fill="#fff" stroke="#000"/><rect x="7" y="7" width="5" height="5" fill="#3a60b0"/></svg>
          <svg class="v-on" viewBox="0 0 16 16"><rect x="3.500" y="2.500" width="9" height="11" fill="#fff" stroke="#000"/><path d="M5 6h6M5 8h6M5 10h6" stroke="#000"/></svg>
          <svg viewBox="0 0 14 14"><path d="M2 3h3M5 6h7M5 9h7M2 12h3" stroke="#000" stroke-dasharray="1 1"/></svg>
          <svg viewBox="0 0 14 14"><path d="M1 2.500q3-1 6 1v9q-3-2-6-1zM13 2.500q-3-1-6 1v9q3-2 6-1z" fill="#fff" stroke="#000"/></svg>
        </div>
        <span class="sb sb-l"></span>
        <span class="hthumb"></span>
        <span class="sb sb-r"></span>
      </div>
    </div>
    <aside class="vbar">
      <span class="vsplit"></span>
      <span class="sb sb-u"></span>
      <div class="vtrack"><span class="vthumb"></span></div>
      <span class="sb sb-d"></span>
      <div class="browse">
        <svg viewBox="0 0 10 10"><path d="M1 1h8M5 2l-3 3h6zM5 5l-3 3h6z" fill="#000" stroke="#000" stroke-width=".7"/></svg>
        <svg viewBox="0 0 10 10"><circle cx="5" cy="5" r="3.500" fill="#b0b0b0" stroke="#000"/></svg>
        <svg viewBox="0 0 10 10"><path d="M1 9h8M5 8L2 5h6zM5 5L2 2h6z" fill="#000" stroke="#000" stroke-width=".7"/></svg>
      </div>
    </aside>
  </main>

  <div class="row draw-row">
    <div class="tb w-dr">
      <span class="lbl lbl-drw"><u>Р</u>исование</span><i class="dd dd-tight"></i>
      <i class="b"><svg><use href="#arr"/></svg></i><i class="s"></i>
      <span class="lbl lbl-auto">Автофи<u>г</u>уры</span><i class="dd dd-tight"></i>
      <i class="b"><svg><use href="#dl"/></svg></i><i class="b"><svg><use href="#da"/></svg></i><i class="b"><svg><use href="#dre"/></svg></i><i class="b"><svg><use href="#dov"/></svg></i><i class="b"><svg viewBox="0 0 18 18"><rect x="1.500" y="2.500" width="15" height="13" fill="#e8ecf8" stroke="#4a648f"/><text x="3" y="9" class="t7 nv">A</text><path d="M8 5h6M8 8h6M3 11h11M3 13h11" stroke="#4a648f"/></svg></i><i class="b"><svg><use href="#dwa"/></svg></i><i class="b"><svg><use href="#ddg"/></svg></i><i class="b"><svg><use href="#dcl"/></svg></i><i class="b"><svg><use href="#pic"/></svg></i><i class="s"></i>
      <i class="b ml1"><svg><use href="#ffl"/></svg></i><i class="dd"></i><i class="b ml2"><svg><use href="#fpen"/></svg></i><i class="dd"></i><i class="b"><svg viewBox="0 0 18 18"><text x="2" y="13" class="t16 bold nv">A</text><rect x="1" y="14" width="16" height="4" fill="#000"/></svg></i><i class="dd"></i>
      <i class="b"><svg><use href="#wd"/></svg></i><i class="b"><svg><use href="#dsh"/></svg></i><i class="b"><svg><use href="#ars"/></svg></i><i class="b"><svg><use href="#shd"/></svg></i><i class="b"><svg><use href="#d3"/></svg></i>
      <span class="gr"><svg><use href="#grip"/></svg></span>
    </div>
  </div>

  <footer class="status">
    <div class="p p1"><span>Стр.&nbsp; 41</span><span>Разд&nbsp; 2</span><span>42/57</span></div>
    <div class="p p2"><span>На</span><span>Ст</span><span>Кол</span></div>
    <div class="p p3">ЗАП</div>
    <div class="p p4">ИСПР</div>
    <div class="p p5">ВДЛ</div>
    <div class="p p6">ЗАМ</div>
    <div class="p p7">русский (Ро</div>
    <div class="p p8"></div><div class="p p9"></div><div class="p p10"></div><div class="p p11"></div>
  </footer>
  <div class="taskbar">
    <span class="task t1"></span><span class="task t2"></span><span class="task t3"></span><span class="task t4"></span><span class="tray"></span>
  </div>
</div>
</body>
</html>
```

FILE: styles.css
```css
* { box-sizing: border-box; }
html, body { margin: 0; padding: 0; }
body { width: 1280px; height: 986px; overflow: hidden; background: #fdfdfd; font: 11px "Liberation Sans", Arial, sans-serif; color: #000; }
.defs { position: absolute; }
.t6 { font: 6px "Liberation Sans", sans-serif; fill: #203060; }
.t7 { font: 7px "Liberation Sans", sans-serif; }
.t9 { font: 9px "Liberation Sans", sans-serif; }
.t10 { font: 10px "Liberation Sans", sans-serif; }
.t11 { font: 11px "Liberation Sans", sans-serif; }
.t13 { font: 13px "Liberation Serif", serif; }
.t15 { font: 15px "Liberation Serif", serif; }
.t16 { font: 16px "Liberation Serif", serif; }
.bold { font-weight: bold; }
.ital { font-style: italic; }
.wh { fill: #fff; }
.nv { fill: #1c3a80; }
.bl { fill: #2a50a0; }
.rd { fill: #a04040; }
.pr { fill: #8050a0; }

.app { width: 1280px; height: 986px; display: flex; flex-direction: column; }

.title { height: 19px; display: flex; align-items: center; flex: none; padding-left: 2px;
  background: linear-gradient(90deg, #0a246a 0, #0c2a72 190px, #1e3c84 190px, #1e3c84 430px, #2c4b8e 430px, #2c4b8e 446px, #3d5b9b 446px, #3d5b9b 506px, #5471a6 506px, #5471a6 686px, #6685b6 686px, #6685b6 794px, #7394c6 794px, #7394c6 921px, #75acd0 921px, #75acd0 932px, #8cadd8 932px, #8cadd8 1082px, #97b8e4 1082px, #97b8e4 1154px, #8cc8f4 1154px, #8cc8f4 1180px, #a4c8ec 1180px); }
.wlogo { width: 16px; height: 16px; flex: none; }
.title-text { margin-left: 3px; color: #fff; font-weight: bold; font-size: 11.5px; }
.winbtns { margin-left: auto; display: flex; gap: 1px; padding-right: 2px; }
.wb { width: 16px; height: 15px; background: #d4d0c8; box-shadow: inset -1px -1px #404040, inset 1px 1px #fff; display: flex; align-items: center; justify-content: center; font: bold 11px "DejaVu Sans", sans-serif; }
.wb-x { margin-left: 2px; }
.wb-min::after { content: ""; width: 6px; height: 2px; background: #000; margin: 7px 3px 0 0; }
.wb-max::after { content: ""; width: 8px; height: 7px; border: 1px solid #000; border-top-width: 2px; box-shadow: 2px -2px 0 -1px #d4d0c8, 2px -2px 0 0 #000; margin: 2px 2px 0 0; }

.menubar { height: 25px; flex: none; display: flex; align-items: center; margin-top: 1px; font-size: 11px; padding-left: 6px;
  background: linear-gradient(90deg, #ebe9e5 0, #ebe9e5 245px, #e4e2de 245px, #e4e2de 300px, #f2f1ee 300px, #f2f1ee 382px, #fdfdfd 382px); }
.menu-grip { width: 2px; height: 12px; background: repeating-linear-gradient(#999 0 2px, transparent 2px 4px); }
.menus { display: grid; grid-template-columns: 42px 53px 35px 57px 54px 52px 58px 42px 60px; margin-left: 9px; }
.ask { color: #a08a8a; margin-left: 645px; width: 134px; font-size: 11px; }
.ask-dd { width: 10px; }
.menu-x { margin-left: 8px; font: bold 10px "DejaVu Sans", sans-serif; }

.row { height: 26px; flex: none; display: flex; gap: 4px; padding-left: 3px; }
.tb { height: 25px; display: flex; align-items: center; padding-bottom: 2px; border-radius: 3px 0 0 3px;
  background: linear-gradient(#fdfdfd 0, #fdfdfd 50%, #d4d0c8 72%); }
.tb::before { content: ""; flex: none; width: 2px; height: 12px; margin: -2px 3px 0 2px; background: repeating-linear-gradient(#999 0 2px, transparent 2px 4px); }
.w-r1 { width: 757px; }
.w-r1b { width: 376px; }
.w-r2 { width: 713px; }
.w-r3 { width: 733px; }
.w-r4 { width: 535px; }
.w-r5 { width: 485px; }
.w-dr { width: 628px; }

.b { width: 23px; height: 23px; flex: none; display: flex; align-items: center; justify-content: center; font-style: normal; }
.b svg { width: 18px; height: 18px; display: block; }
.b.on { border: 1px solid #0a246a; background: #e4e2dc; }
.s { width: 6px; height: 19px; flex: none; background: linear-gradient(90deg, transparent 2px, #c4c0b8 2px, #c4c0b8 3px, #fff 3px, #fff 4px, transparent 4px); }
.dd { width: 10px; height: 23px; flex: none; display: flex; align-items: center; justify-content: center; font-style: normal; }
.dd::after { content: ""; width: 0; height: 0; border: 3.5px solid transparent; border-top: 4px solid #000; border-bottom: 0; margin-top: 2px; }
.dd.dis::after { border-top-color: #a8a6a0; }
.dd-tight { width: 8px; }
.ml1 { margin-left: 1px; }
.ml2 { margin-left: 2px; }
.ml3 { margin-left: 3px; }
.ml4 { margin-left: 4px; }
.pil { font: bold 18px "Liberation Serif", serif; }
.fA { font: 21px "Liberation Serif", serif; color: #1c3a80; }
.gr { margin-left: auto; align-self: flex-start; width: 11px; height: 25px; flex: none; background: #808080; border-radius: 0 3px 3px 0; display: flex; align-items: flex-end; justify-content: center; padding-bottom: 1px; }
.gr svg { width: 9px; height: 12px; }
.combo { height: 20px; flex: none; display: flex; align-items: center; justify-content: space-between; background: #fdfdfd; padding-left: 3px; white-space: nowrap; }
.combo .dd { height: 20px; }
.c-zoom { width: 57px; margin-left: 1px; padding-left: 3px; letter-spacing: .2px; color: #10205a; }
.c-line { width: 186px; padding-left: 19px; }
.lnsample { width: 135px; height: 1px; background: #000; }
.c-wd { width: 44px; padding-left: 11px; }
.c-sty { width: 99px; }
.c-fnt { width: 124px; padding-left: 2px; letter-spacing: -.32px; }
.c-sz { width: 46px; padding-left: 3px; }
.c-rev { width: 214px; padding-left: 2px; letter-spacing: -.1px; }
.c-kons { width: 204px; margin-left: 5px; }
.lbl { white-space: nowrap; flex: none; }
.lbl-read { margin-left: -1px; }
.lbl-show { margin-left: 4px; width: 49px; }
.sep-show { margin-left: 4px; }
.lbl-kons { margin-left: 2px; width: 95px; }
.b-find { width: 22px; }
.lbl-find { margin-left: -1px; width: 36px; }
.b-link { margin-right: -1px; }
.fb { font: bold 14px "Liberation Serif", serif; }
.fi { font-style: italic; }
.fu { text-decoration: underline; }
.lbl-drw { margin-left: 2px; width: 57px; }
.lbl-auto { margin-left: 4px; width: 65px; }

.doc { height: 756px; flex: none; display: flex; background: linear-gradient(#d4d0c8 25px, transparent 25px); border-top: 1px solid #404040; }
.doc-left { width: 1262px; flex: none; display: flex; flex-direction: column; }
.ruler { display: block; width: 1262px; height: 24px; flex: none; }
.rn text { font: 10px "Liberation Sans", sans-serif; fill: #000050; text-anchor: middle; }
.mid { flex: 1; display: flex; min-height: 0; }
.gutter { width: 26px; flex: none; background: #d4d0c8; }
.pasteboard { flex: 1; background: #808080; padding-left: 179px; overflow: hidden; }
.page { width: 880px; height: 100%; background: #fdfdfd; border-left: 1px solid #404040; border-right: 3px solid #000; }
.drawing { display: block; width: 876px; height: 715px; }
.axis path { stroke: #303030; stroke-width: 1; fill: none; }
.axis .axis-b { stroke: #6c6c6c; stroke-width: 1.5; }
.thin path { stroke: #383838; stroke-width: 1; fill: none; }
.heavy path { stroke: #000; stroke-width: 2; fill: none; }
.heads polygon { fill: #000; }
.bold-arrow path { stroke: #000; stroke-width: 3.2; fill: none; }
.dt text { font: 19.5px "Liberation Serif", serif; fill: #000; }

.hbar { height: 16px; flex: none; display: flex; background: #d4d0c8; align-items: stretch; }
.views { width: 84px; flex: none; display: flex; align-items: center; padding-left: 4px; gap: 2px; }
.views svg { width: 14px; height: 14px; flex: none; }
.views .v-on { width: 16px; height: 16px; border: 1px solid #0a246a; background: #e4e2dc; }
.sb { flex: none; background: #d4d0c8; box-shadow: inset -1px -1px #404040, inset 1px 1px #fff, inset -2px -2px #808080; display: flex; align-items: center; justify-content: center; }
.sb-l { width: 14px; height: 16px; }
.sb-r { width: 16px; height: 16px; }
.sb-l::after { content: ""; border: 4px solid transparent; border-right: 5px solid #000; border-left: 0; }
.sb-r::after { content: ""; border: 4px solid transparent; border-left: 5px solid #000; border-right: 0; }
.hthumb { flex: 1; margin: 0 2px 0 1px; background: #d4d0c8; box-shadow: inset -1px -1px #404040, inset 0 1px #fff, inset -2px -2px #808080; }

.vbar { width: 16px; flex: none; display: flex; flex-direction: column; align-items: center; background: #d4d0c8; }
.vsplit { width: 15px; height: 6px; flex: none; box-shadow: inset -1px -1px #404040, inset 1px 1px #fff; }
.sb-u, .sb-d { width: 15px; height: 15px; }
.sb-u { margin-top: 1px; }
.sb-u::after { content: ""; border: 4px solid transparent; border-bottom: 5px solid #000; border-top: 0; }
.sb-d::after { content: ""; border: 4px solid transparent; border-top: 5px solid #000; border-bottom: 0; }
.vtrack { height: 653px; width: 16px; flex: none; padding-top: 463px; background: repeating-conic-gradient(#d4d0c8 0 25%, #fdfdfd 0 50%) 0 0 / 2px 2px; }
.vthumb { display: block; width: 15px; height: 15px; background: #d4d0c8; box-shadow: inset -1px -1px #404040, inset 1px 1px #fff; }
.browse { flex: 1; width: 16px; display: flex; flex-direction: column; align-items: center; justify-content: space-around; padding: 2px 0 17px; }
.browse svg { width: 10px; height: 10px; }

.draw-row { margin-top: 3px; height: 25px; }
.status { height: 22px; flex: none; background: #d4d0c8; border-top: 1px solid #909090; display: flex; padding: 3px 0 0 5px; }
.p { height: 17px; flex: none; border: 1px solid #e2dfd8; display: flex; align-items: center; color: #8a8a8a; justify-content: center; font-size: 11px; }
.p1 { width: 195px; color: #202020; justify-content: flex-start; padding-left: 4px; }
.p1 span:nth-child(1) { width: 67px; }
.p1 span:nth-child(2) { width: 76px; }
.p2 { width: 166px; margin-left: 4px; justify-content: flex-start; padding-left: 3px; }
.p2 span:nth-child(1) { width: 61px; }
.p2 span:nth-child(2) { width: 45px; }
.p3 { width: 27px; margin-left: 5px; }
.p4 { width: 31px; margin-left: 5px; }
.p5 { width: 26px; margin-left: 6px; }
.p6 { width: 26px; margin-left: 6px; }
.p7 { width: 63px; margin-left: 5px; color: #101010; justify-content: flex-start; padding-left: 1px; }
.p8 { width: 44px; margin-left: 7px; }
.p9 { width: 37px; margin-left: 5px; }
.p10 { width: 26px; margin-left: 5px; }
.p11 { width: 29px; margin-left: 6px; }
.taskbar { flex: 1; background: #d4d0c8; border-top: 1px solid #f4f3f0; display: flex; padding-top: 2px; }
.task { height: 3px; background: #ecebe6; border-top: 1px solid #fff; border-right: 1px solid #606060; }
.t1 { width: 52px; }
.t2 { width: 48px; margin-left: 68px; }
.t3 { width: 45px; margin-left: 52px; }
.t4 { width: 47px; margin-left: 6px; background: #808080; border-top-color: #404040; }
.tray { width: 183px; height: 3px; margin-left: auto; margin-right: 1px; border: 1px solid #808080; border-bottom: 0; }
```
